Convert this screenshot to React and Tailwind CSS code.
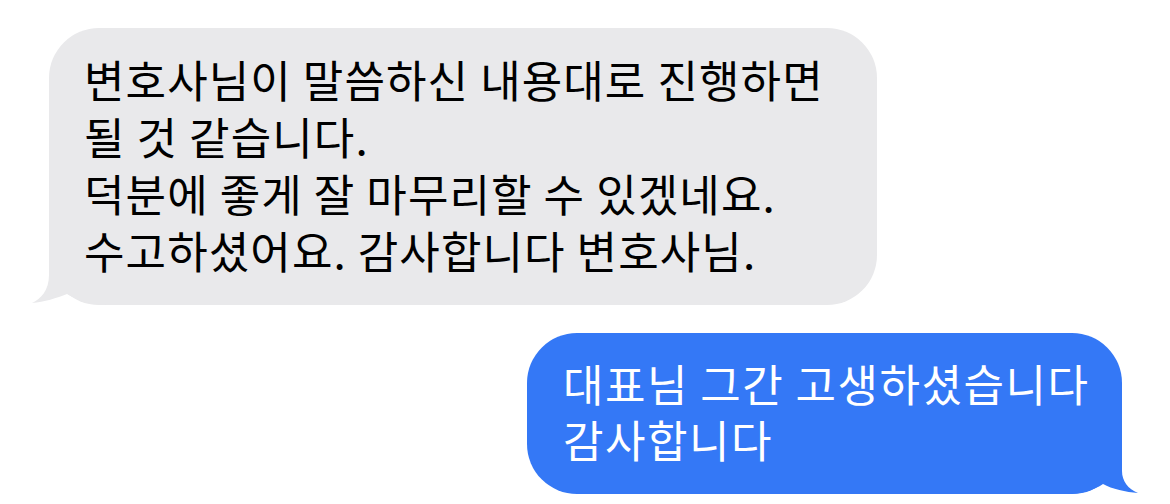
import React from "react";

const GrayTail = () => (
  <svg
    className="absolute left-[-20px] bottom-0"
    width="100"
    height="60"
    viewBox="0 0 100 60"
  >
    <path
      d="M20,0 L20,30 C20,45 12,54 3,58 C15,57 28,53 38,49 C50,56 62,60 80,60 L100,60 L100,0 Z"
      fill="#E9E9EB"
    />
  </svg>
);

const BlueTail = () => (
  <svg
    className="absolute right-[-20px] bottom-0"
    width="120"
    height="60"
    viewBox="0 0 120 60"
  >
    <path
      d="M100,0 L100,37 C100,47 106,55 116,59 C104,58 90,55 81,50 C72,56 60,60 45,60 L0,60 L0,0 Z"
      fill="#3478F6"
    />
  </svg>
);

const App = () => {
  return (
    <div
      className="w-[1170px] h-[504px] bg-white flex flex-col overflow-hidden"
      style={{ fontFamily: '"Noto Sans CJK KR", "Noto Sans", sans-serif' }}
    >
      <div className="relative self-start ml-[49px] mt-[28px] w-[828px] rounded-[50px] bg-[#E9E9EB] pl-[35px] pr-[20px] pt-[23px] pb-[26px]">
        <GrayTail />
        <p className="relative text-[44px] leading-[57px] text-black tracking-[1.1px] whitespace-nowrap">
          변호사님이 말씀하신 내용대로 진행하면
          <br />
          될 것 같습니다.
          <br />
          덕분에 좋게 잘 마무리할 수 있겠네요.
          <br />
          수고하셨어요. 감사합니다 변호사님.
        </p>
      </div>

      <div className="relative self-end mr-[48px] mt-[28px] w-[595px] rounded-[50px] bg-[#3478F6] pl-[36px] pr-[10px] pt-[22px] pb-[27px]">
        <BlueTail />
        <p className="relative text-[44px] leading-[56px] text-white tracking-[1.5px] whitespace-nowrap">
          대표님 그간 고생하셨습니다
          <br />
          감사합니다
        </p>
      </div>
    </div>
  );
};

export default App;
